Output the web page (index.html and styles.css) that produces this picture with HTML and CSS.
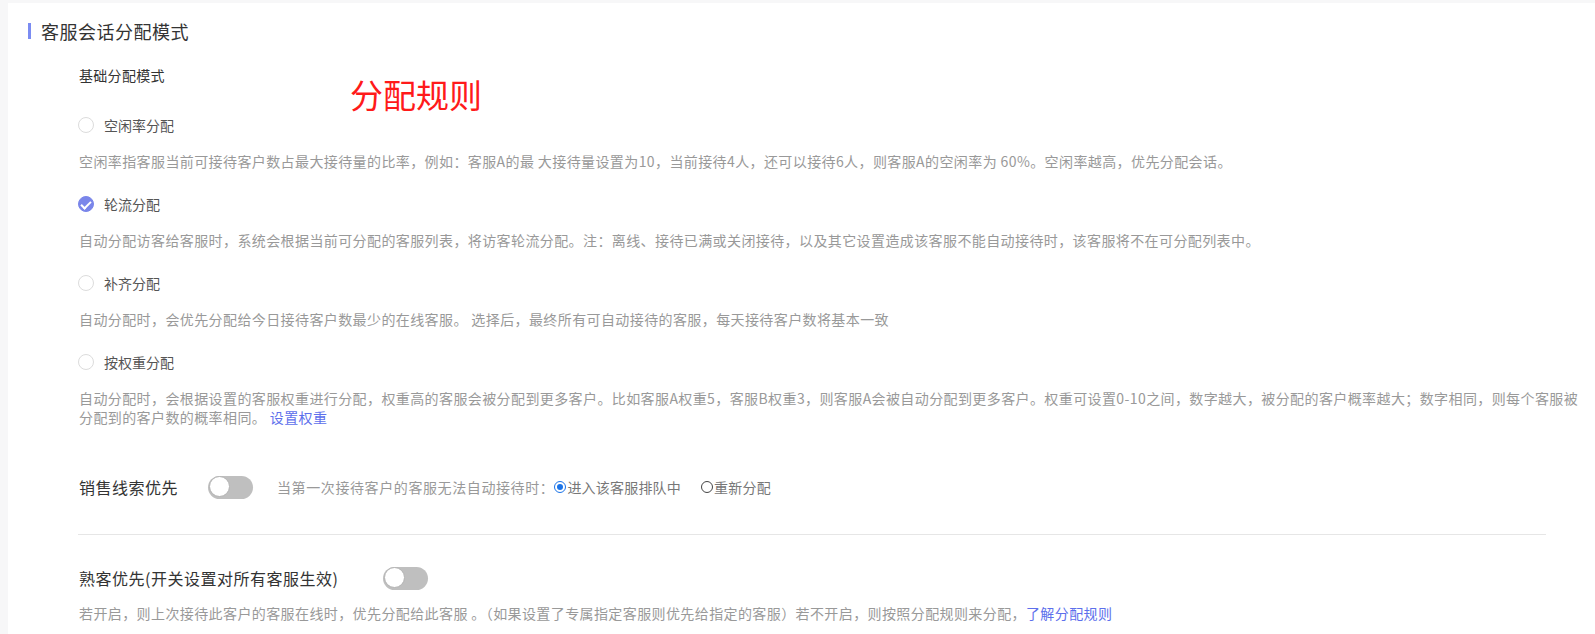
FILE: index.html
```html
<!DOCTYPE html>
<html lang="zh-CN">
<head>
    <meta charset="UTF-8">
    <title>客服会话分配模式</title>
    <link rel="stylesheet" href="styles.css">
</head>
<body>
    <div class="panel">
        <div class="section-title">客服会话分配模式</div>
        <div class="section-body">
            <div class="sub-title">基础分配模式</div>
            <div class="mark">分配规则</div>

            <div class="option first">
                <div class="radio-row"><span class="radio"></span>空闲率分配</div>
                <div class="desc">空闲率指客服当前可接待客户数占最大接待量的比率，例如：客服A的最 大接待量设置为10，当前接待4人，还可以接待6人，则客服A的空闲率为 60%。空闲率越高，优先分配会话。</div>
            </div>
            <div class="option">
                <div class="radio-row"><span class="radio checked"></span>轮流分配</div>
                <div class="desc">自动分配访客给客服时，系统会根据当前可分配的客服列表，将访客轮流分配。注：离线、接待已满或关闭接待，以及其它设置造成该客服不能自动接待时，该客服将不在可分配列表中。</div>
            </div>
            <div class="option">
                <div class="radio-row"><span class="radio"></span>补齐分配</div>
                <div class="desc">自动分配时，会优先分配给今日接待客户数最少的在线客服。 选择后，最终所有可自动接待的客服，每天接待客户数将基本一致</div>
            </div>
            <div class="option">
                <div class="radio-row"><span class="radio"></span>按权重分配</div>
                <div class="desc">自动分配时，会根据设置的客服权重进行分配，权重高的客服会被分配到更多客户。比如客服A权重5，客服B权重3，则客服A会被自动分配到更多客户。权重可设置0-10之间，数字越大，被分配的客户概率越大；数字相同，则每个客服被分配到的客户数的概率相同。 <a class="link" href="#">设置权重</a></div>
            </div>

            <div class="switch-row sales">
                <span class="switch-label">销售线索优先</span>
                <span class="switch"></span>
                <span class="hint">当第一次接待客户的客服无法自动接待时：</span>
                <span class="mini-radio on"></span><span class="hint-opt">进入该客服排队中</span>
                <span class="mini-radio"></span><span class="hint-opt">重新分配</span>
            </div>

            <div class="divider"></div>

            <div class="switch-row regular">
                <span class="switch-label">熟客优先(开关设置对所有客服生效)</span>
                <span class="switch"></span>
            </div>
            <div class="desc last">若开启，则上次接待此客户的客服在线时，优先分配给此客服 。（如果设置了专属指定客服则优先给指定的客服）若不开启，则按照分配规则来分配，<a class="link" href="#">了解分配规则</a></div>
        </div>
    </div>
</body>
</html>
```

FILE: styles.css
```css
body {
    margin: 0;
    background: #f7f7f8;
    font-family: "Noto Sans CJK SC", "Microsoft YaHei", sans-serif;
    color: #333;
    height: 634px;
    overflow: hidden;
}
.panel {
    margin: 3px 0 0 8px;
    background: #fff;
    height: 640px;
    padding: 17px 13px 0 20px;
    box-sizing: border-box;
}
.section-title {
    display: flex;
    align-items: center;
    font-size: 18px;
    line-height: 22px;
    letter-spacing: 0.5px;
    color: #333;
}
/* 左侧蓝色竖条 */
.section-title::before {
    content: "";
    width: 3px;
    height: 16px;
    background: #7b8cf2;
    margin-right: 10px;
}
.section-body {
    position: relative;
    padding-left: 50px;
}
.sub-title {
    margin-top: 23px;
    padding-left: 1px;
    font-size: 14px;
    line-height: 20px;
    letter-spacing: 0.3px;
    color: #333;
}
/* 红色标注 */
.mark {
    position: absolute;
    left: 322px;
    top: 9px;
    font-size: 33px;
    line-height: 40px;
    color: #ff1a1a;
}
.option {
    margin-top: 23px;
}
.option.first {
    margin-top: 30px;
}
.radio-row {
    display: flex;
    align-items: center;
    font-size: 14px;
    line-height: 20px;
    color: #555;
}
.radio {
    width: 16px;
    height: 16px;
    border: 1px solid #dcdcdc;
    border-radius: 50%;
    box-sizing: border-box;
    margin-right: 10px;
    position: relative;
}
.radio.checked {
    background: #7a86ea;
    border-color: #7a86ea;
}
.radio.checked::after {
    content: "";
    position: absolute;
    left: 4px;
    top: 2px;
    width: 4px;
    height: 8px;
    border: solid #fff;
    border-width: 0 2px 2px 0;
    transform: rotate(45deg);
}
.desc {
    margin-top: 17px;
    padding-left: 1px;
    font-size: 14px;
    line-height: 19px;
    letter-spacing: 0.4px;
    color: #999;
}
.link {
    color: #5d70ec;
    text-decoration: none;
}
.switch-row {
    display: flex;
    align-items: center;
    height: 24px;
    padding-left: 1px;
}
.sales {
    margin-top: 48px;
}
.regular {
    margin-top: 31px;
}
.switch-label {
    font-size: 16px;
    letter-spacing: 0.5px;
    color: #333;
}
.sales .switch-label {
    margin-right: 30px;
}
.regular .switch-label {
    margin-right: 45px;
}
.switch {
    width: 45px;
    height: 23px;
    border-radius: 12px;
    background: #bfbfbf;
    position: relative;
    flex-shrink: 0;
}
.switch::after {
    content: "";
    position: absolute;
    left: 1px;
    top: 0;
    width: 19px;
    height: 19px;
    border-radius: 50%;
    background: #fff;
    border: 1px solid #b3b3b3;
}
.hint {
    margin-left: 24px;
    font-size: 14px;
    letter-spacing: 0.6px;
    color: #999;
}
.hint-opt {
    font-size: 14px;
    letter-spacing: 0.2px;
    color: #777;
    margin-right: 20px;
}
.mini-radio {
    width: 12px;
    height: 12px;
    border: 1px solid #444;
    border-radius: 50%;
    box-sizing: border-box;
    position: relative;
    margin-right: 1px;
}
.mini-radio.on {
    border-color: #1a73e8;
}
.mini-radio.on::after {
    content: "";
    position: absolute;
    left: 2px;
    top: 2px;
    width: 6px;
    height: 6px;
    border-radius: 50%;
    background: #1a73e8;
}
.divider {
    margin-top: 35px;
    margin-right: 36px;
    height: 1px;
    background: #e6e6e6;
}
.desc.last {
    margin-top: 14px;
}
```
